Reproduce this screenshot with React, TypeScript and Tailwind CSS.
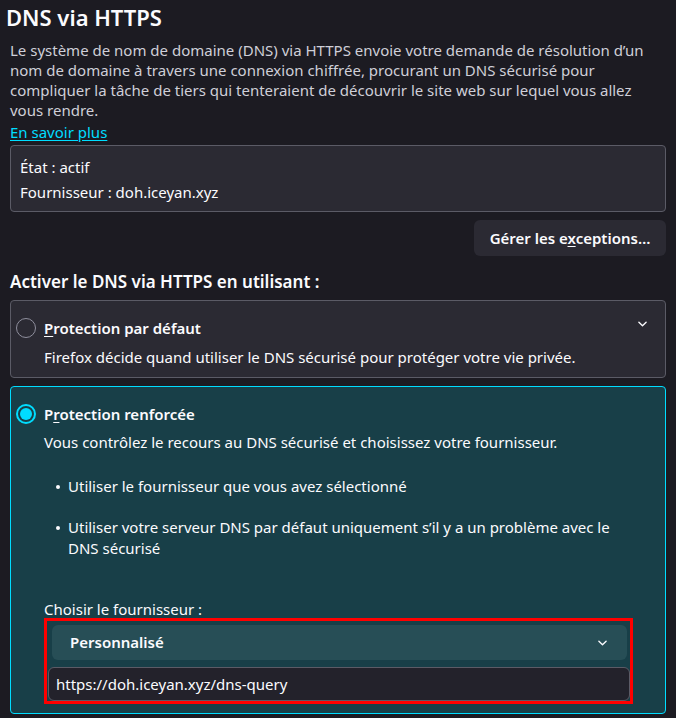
import React from "react";

function Chevron() {
  return (
    <svg width="9" height="6" viewBox="0 0 10 6" fill="none" className="text-[#fbfbfe]">
      <path d="M1 1l4 4 4-4" stroke="currentColor" strokeWidth="1.5" strokeLinecap="round" strokeLinejoin="round" />
    </svg>
  );
}

function Bullet() {
  return (
    <span className="flex h-[21px] w-[24px] shrink-0 items-center pl-[12px]">
      <span className="h-[4px] w-[4px] rounded-full bg-[#fbfbfe]"></span>
    </span>
  );
}

export default function App() {
  return (
    <div className="min-h-[718px] w-[676px] bg-[#1c1b22] text-[#fbfbfe] overflow-hidden" style={{ fontFamily: '"Noto Sans", sans-serif' }}>
      <div className="pl-[6px] pt-[1px]">
        <h1 className="text-[22px] font-semibold leading-[32px]">DNS via HTTPS</h1>
      </div>
      <div className="px-[10px]">
        <p className="mt-[7px] text-[15px] leading-[20px] text-[#cfcfd8]">
          Le système de nom de domaine (DNS) via HTTPS envoie votre demande de résolution d’un nom de domaine à travers une connexion chiffrée, procurant un DNS sécurisé pour compliquer la tâche de tiers qui tenteraient de découvrir le site web sur lequel vous allez vous rendre.
        </p>
        <a className="mt-[2px] block text-[15px] leading-[20px] text-[#00ddff] underline underline-offset-2">En savoir plus</a>
        <div className="mt-[3px] rounded-[4px] border border-[#5b5b66] bg-[#2b2a33] px-[9px] pt-[9px] pb-[6px] text-[15px] leading-[25px]">
          <div>État : actif</div>
          <div>Fournisseur : doh.iceyan.xyz</div>
        </div>
        <div className="mt-[8px] flex justify-end">
          <button className="h-[36px] w-[192px] rounded-[6px] bg-[#2b2a33] text-[15px] font-semibold">
            Gérer les e<span className="underline underline-offset-2">x</span>ceptions…
          </button>
        </div>
        <h2 className="mt-[14px] text-[17px] font-semibold leading-[24px]">Activer le DNS via HTTPS en utilisant :</h2>
        <div className="mt-[6px] rounded-[4px] border border-[#5b5b66] bg-[#2b2a33] pl-[5px] pr-[18px] pt-[16px] pb-[9px]">
          <div className="flex items-center">
            <div className="h-[20px] w-[20px] rounded-full border-[1.5px] border-[#8f8f9d]"></div>
            <div className="ml-[8px] flex-1 text-[15px] font-semibold leading-[22px]">
              <span className="underline underline-offset-2">P</span>rotection par défaut
            </div>
            <div className="-mt-[8px]"><Chevron /></div>
          </div>
          <div className="ml-[28px] mt-[7px] text-[15px] leading-[22px]">Firefox décide quand utiliser le DNS sécurisé pour protéger votre vie privée.</div>
        </div>
        <div className="mt-[8px] rounded-[4px] border border-[#00ddff] bg-[#183f48] pl-[5px] pr-[32px] pt-[16px] pb-[9px]">
          <div className="flex items-center">
            <div className="flex h-[20px] w-[20px] items-center justify-center rounded-full border-[2px] border-[#00ddff]">
              <div className="h-[12px] w-[12px] rounded-full bg-[#00ddff]"></div>
            </div>
            <div className="ml-[8px] flex-1 text-[15px] font-semibold leading-[22px]">
              P<span className="underline underline-offset-2">r</span>otection renforcée
            </div>
          </div>
          <div className="ml-[28px] mt-[6px] text-[15px] leading-[22px]">Vous contrôlez le recours au DNS sécurisé et choisissez votre fournisseur.</div>
          <ul className="ml-[28px] mt-[23px] text-[15px] leading-[21px]">
            <li className="flex">
              <Bullet />
              <span>Utiliser le fournisseur que vous avez sélectionné</span>
            </li>
            <li className="mt-[20px] flex">
              <Bullet />
              <span>Utiliser votre serveur DNS par défaut uniquement s’il y a un problème avec le DNS sécurisé</span>
            </li>
          </ul>
          <div className="ml-[28px] mt-[42px] text-[15px] leading-[16px]">Choisir le fournisseur :</div>
          <div className="ml-[28px] mt-[1px] border-[3px] border-[#ff0000] pl-[1px] pr-0 pb-0 pt-[4px]">
            <div className="ml-[4px] mr-[3px] flex h-[35px] items-center rounded-[6px] bg-[#274e56] pl-[18px] pr-[20px]">
              <span className="flex-1 text-[15px] font-semibold">Personnalisé</span>
              <Chevron />
            </div>
            <div className="mt-[7px] flex h-[34px] items-center rounded-[6px] border border-[#5b5b66] bg-[#23222b] pl-[7px] text-[15px]">
              https://doh.iceyan.xyz/dns-query
            </div>
          </div>
        </div>
      </div>
    </div>
  );
}
